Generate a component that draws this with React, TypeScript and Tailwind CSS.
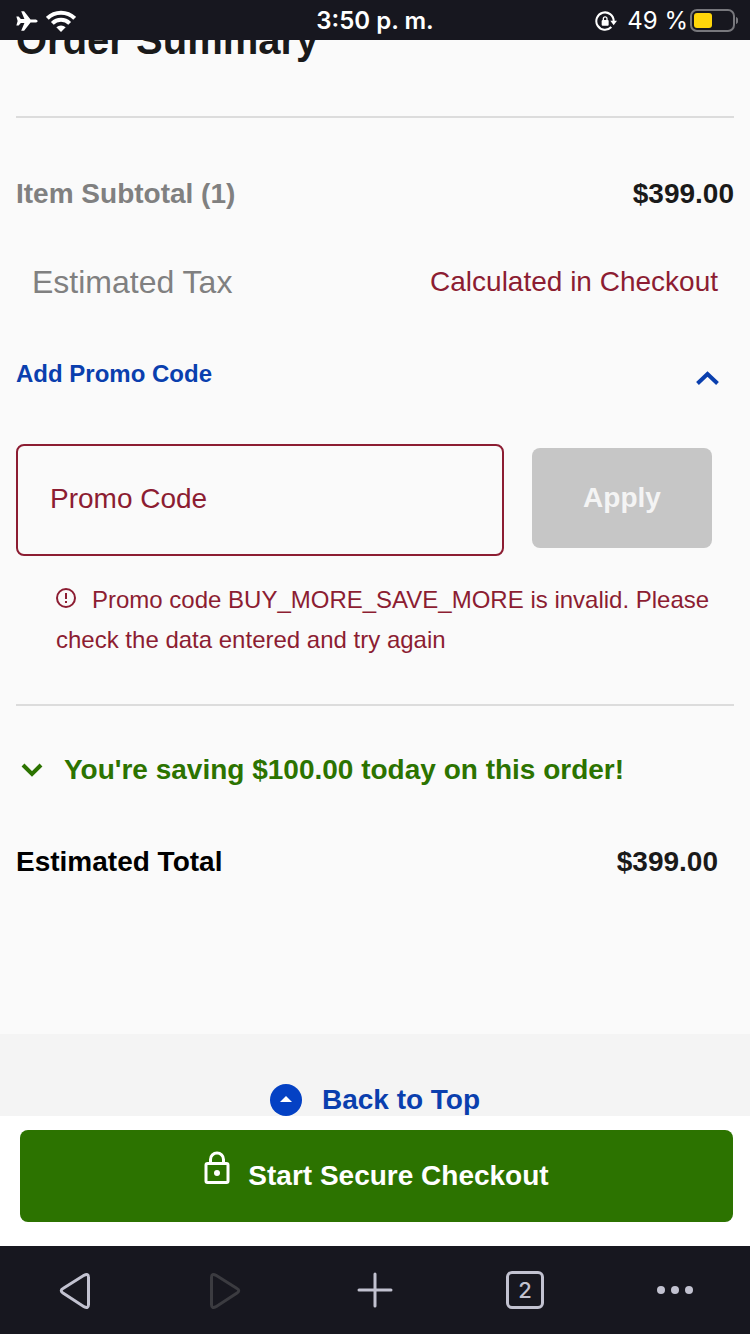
import type { ReactNode } from "react";

function StatusBar() {
  return (
    <header className="grid h-10 shrink-0 grid-cols-3 items-center bg-[#17171f] px-3 pt-0.5 font-[Inter,sans-serif] text-2xl text-white">
      <div className="flex items-center gap-2 pl-1">
        <svg width="22" height="20" viewBox="0 0 66 62" fill="currentColor" aria-label="Airplane mode">
          <path d="M66 31c0 3-4 5-9 5H44L24 61h-9l10-24H14L7 45H0l4-14L0 17h7l7 8h11L15 1h9l20 25h13c5 0 9 2 9 5z" />
        </svg>
        <svg width="30" height="22" viewBox="0 0 90 66" fill="none" stroke="currentColor" strokeWidth="12" aria-label="Wi-Fi">
          <path d="M4 25a58 58 0 0 1 82 0" />
          <path d="M19 40a37 37 0 0 1 52 0" />
          <path d="M45 66 31 52a20 20 0 0 1 28 0z" fill="currentColor" stroke="none" />
        </svg>
      </div>

      <time className="text-center font-semibold">3:50 p. m.</time>

      <div className="flex items-center justify-end">
        <svg className="mr-2.5" width="22" height="20" viewBox="0 0 66 60" fill="none" aria-label="Rotation lock">
          <path d="M56 30A26 26 0 1 0 49 48" stroke="currentColor" strokeWidth="6" />
          <path d="M46 29h20L56 43z" fill="currentColor" />
          <rect x="20" y="27" width="21" height="17" rx="3" fill="currentColor" />
          <path d="M25 28v-5a5.500 5.500 0 0 1 11 0v5" stroke="currentColor" strokeWidth="4" />
        </svg>
        <span className="mr-0.5">49 %</span>
        <svg width="48" height="24" viewBox="0 0 48 24" fill="none" aria-label="Battery">
          <rect x="1" y="1" width="43" height="21" rx="6" stroke="#77777c" strokeWidth="2" />
          <rect x="4" y="4" width="18" height="15" rx="3" fill="#ffd60a" />
          <path d="M46 8c3 1 3 6 0 7z" fill="#77777c" />
        </svg>
      </div>
    </header>
  );
}

function OrderSummary() {
  return (
    <section className="shrink-0 px-4 pb-38 text-[28px] leading-10">
      <h1 className="-mt-6 text-[40px] leading-12 font-bold text-[#1a1a1a]">Order Summary</h1>
      <hr className="mt-13 border-t-2 border-[#dcdcdc]" />

      <div className="mt-14 flex justify-between font-bold">
        <span className="text-[#808080]">Item Subtotal (1)</span>
        <span className="text-[#1a1a1a]">$399.00</span>
      </div>

      <div className="mt-12 flex justify-between px-4">
        <span className="text-[32px] text-[#808080]">Estimated Tax</span>
        <span className="text-[#8c1d32]">Calculated in Checkout</span>
      </div>

      <button className="mt-13 flex w-full items-center justify-between pr-3.5 text-2xl leading-10 font-bold text-[#0a3fae]">
        Add Promo Code
        <svg width="24" height="24" viewBox="0 0 24 24" fill="none" stroke="currentColor" strokeWidth="4">
          <path d="m1.500 21.500 10-9.500 10 9.500" />
        </svg>
      </button>

      <form className="mt-[50px] flex items-start gap-7 pr-5.5">
        <input
          type="text"
          aria-label="Promo Code"
          placeholder="Promo Code"
          className="h-28 min-w-0 flex-1 rounded-lg border-2 border-[#8c1d32] px-8 pb-0.5 text-[#8c1d32] placeholder:text-[#8c1d32] outline-none"
        />
        <button type="button" className="mt-1 h-25 w-45 rounded-lg bg-[#c6c6c6] font-bold text-[#f4f4f4]">
          Apply
        </button>
      </form>

      <p className="mt-6 pl-10 text-2xl leading-10 text-[#8c1d32]">
        <svg className="mr-4 mb-2 inline" width="20" height="20" viewBox="0 0 20 20" fill="none" stroke="currentColor" strokeWidth="2">
          <circle cx="10" cy="10" r="9" />
          <path d="M10 5v6M10 13v2" />
        </svg>
        Promo code BUY_MORE_SAVE_MORE is invalid. Please check the data entered and try again
      </p>

      <hr className="mt-11 border-t-2 border-[#dcdcdc]" />

      <button className="mt-11 flex items-center gap-5 pl-1 font-bold text-[#2c7300]">
        <svg width="24" height="24" viewBox="0 0 24 24" fill="none" stroke="currentColor" strokeWidth="4">
          <path d="m3 7 9 9 9-9" />
        </svg>
        You're saving $100.00 today on this order!
      </button>

      <div className="mt-13 flex justify-between pr-4 font-bold">
        <span className="text-black">Estimated Total</span>
        <span className="text-[#1a1a1a]">$399.00</span>
      </div>
    </section>
  );
}

function CheckoutBar() {
  return (
    <div className="shrink-0 bg-white pt-3.5 pr-[17px] pb-6 pl-5">
      <button className="flex h-23 w-full items-center justify-center gap-[18px] rounded-lg bg-[#2c7300] text-[28px] font-bold text-white">
        <svg className="mb-4" width="26" height="34" viewBox="0 0 26 34" fill="none" stroke="currentColor" strokeWidth="3">
          <rect x="2" y="12.500" width="22" height="19" rx="1.500" />
          <path d="M6.500 12V8.500a6.500 6.500 0 0 1 13 0V12" />
          <circle cx="13" cy="22" r="3" fill="currentColor" stroke="none" />
        </svg>
        Start Secure Checkout
      </button>
    </div>
  );
}

function ToolButton({ label, children }: { label: string; children: ReactNode }) {
  return (
    <button aria-label={label} className="flex items-center justify-center">
      {children}
    </button>
  );
}

function BrowserToolbar() {
  return (
    <nav className="grid h-22 shrink-0 grid-cols-5 bg-[#17171f] text-[#c2c2d0]">
      <ToolButton label="Back">
        <svg width="36" height="38" viewBox="0 0 36 38" fill="none" stroke="currentColor" strokeWidth="3">
          <path d="M27 4.300Q31.500 2 31.500 6.500V33.500Q31.500 38 27 35.700L6 22Q2.500 19.500 6 17.500z" />
        </svg>
      </ToolButton>
      <ToolButton label="Forward">
        <svg width="36" height="38" viewBox="0 0 36 38" fill="none" stroke="#3b3b40" strokeWidth="3">
          <path d="M9 4.300Q4.500 2 4.500 6.500V33.500Q4.500 38 9 35.700L30 22Q33.500 19.500 30 17.500z" />
        </svg>
      </ToolButton>
      <ToolButton label="New tab">
        <svg width="36" height="36" viewBox="0 0 36 36" fill="none" stroke="currentColor" strokeWidth="3" strokeLinecap="round">
          <path d="M2 18h32M18 2v32" />
        </svg>
      </ToolButton>
      <ToolButton label="Tabs">
        <span className="flex size-[38px] items-center justify-center rounded-md border-3 border-current font-[Inter,sans-serif] text-[22px] font-medium">
          2
        </span>
      </ToolButton>
      <ToolButton label="Menu">
        <svg width="36" height="8" viewBox="0 0 36 8" fill="currentColor">
          <circle cx="4" cy="4" r="4" />
          <circle cx="18" cy="4" r="4" />
          <circle cx="32" cy="4" r="4" />
        </svg>
      </ToolButton>
    </nav>
  );
}

function App() {
  return (
    <div className="flex h-screen flex-col font-['Liberation_Sans',Arial,sans-serif]">
      <StatusBar />

      <main className="flex flex-1 flex-col overflow-hidden bg-[#fafafa]">
        <OrderSummary />
        <footer className="flex flex-1 shrink-0 justify-center bg-[#f4f4f4] pt-11.5">
          <a href="#top" className="flex h-10 items-center gap-5 text-[28px] leading-10 font-bold text-[#0a3fae]">
            <svg width="32" height="32" viewBox="0 0 32 32">
              <circle cx="16" cy="16" r="16" fill="#0441c4" />
              <path d="m10 18 6-6 6 6z" fill="#fff" />
            </svg>
            Back to Top
          </a>
        </footer>
      </main>

      <CheckoutBar />
      <BrowserToolbar />
    </div>
  );
}

export default App;
